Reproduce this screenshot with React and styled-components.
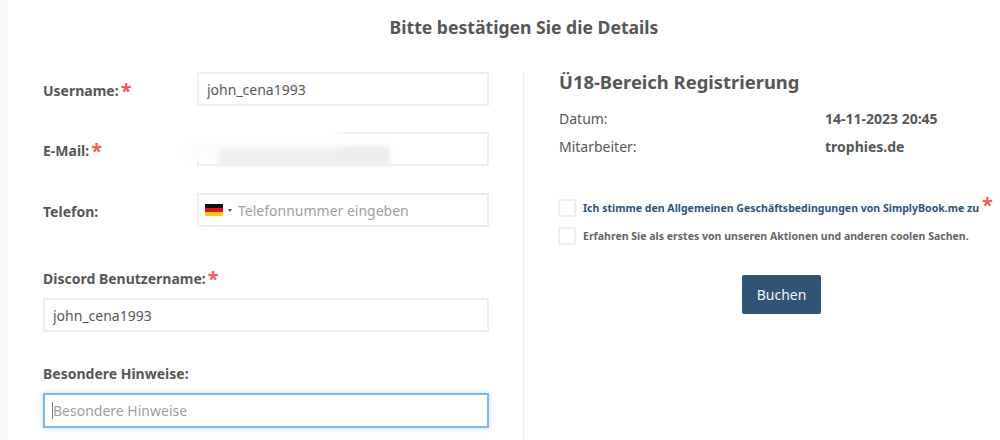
import React from "react";
import styled, { createGlobalStyle } from "styled-components";

const GlobalStyle = createGlobalStyle`
  html, body {
    margin: 0;
    padding: 0;
    background: #fff;
    overflow: hidden;
  }
  body {
    font-family: "Noto Sans", "Open Sans", sans-serif;
    color: #575757;
  }
`;

const Page = styled.div`
  width: 1000px;
  height: 440px;
  overflow: hidden;
  border-left: 8px solid #f8f8f8;
  box-sizing: border-box;
  position: relative;
`;

const Title = styled.h2`
  margin: 0;
  padding: 16px 0 0 40px;
  height: 72px;
  box-sizing: border-box;
  font-size: 17.6px;
  line-height: 22px;
  font-weight: 700;
  text-align: center;
  color: #575757;
`;

const Columns = styled.div`
  display: flex;
  padding-left: 35px;
`;

const FormColumn = styled.div`
  width: 446px;
  flex: none;
`;

const Row = styled.div`
  display: grid;
  grid-template-columns: 154px 292px;
  align-items: center;
  height: 34px;
  margin-bottom: ${({ $gap }) => $gap}px;
`;

const Label = styled.label`
  display: flex;
  align-items: center;
  gap: 2px;
  font-size: 14px;
  line-height: 20px;
  font-weight: 700;
  color: #575757;
  padding-top: 3px;
`;

const StackedLabel = styled(Label)`
  padding-top: 0;
  margin-bottom: ${({ $gap }) => $gap}px;
`;

const Star = styled.span`
  color: #f4595c;
  font-size: 20px;
  line-height: 20px;
  font-weight: 700;
  height: 20px;
  position: relative;
  top: ${({ $top }) => $top || 0}px;
`;

const TextInput = styled.input`
  display: block;
  width: 100%;
  height: ${({ $height }) => $height || 34}px;
  box-sizing: border-box;
  border: 2px solid ${({ $focused }) => ($focused ? "#7fb7e6" : "#eeeeee")};
  box-shadow: ${({ $focused }) => ($focused ? "0 0 5px rgba(127, 183, 230, 0.55)" : "none")};
  background: #fff;
  border-radius: 0;
  outline: none;
  padding: 0 8px;
  font-family: inherit;
  font-size: 14px;
  color: #575757;
  &::placeholder {
    color: #9f9f9f;
    opacity: 1;
  }
`;

const NotesField = styled.div`
  position: relative;
  &::after {
    content: "";
    position: absolute;
    left: 9px;
    top: 9px;
    width: 1px;
    height: 17px;
    background: #777;
  }
`;

const PhoneBox = styled.div`
  display: flex;
  align-items: center;
  height: 34px;
  box-sizing: border-box;
  border: 2px solid #eeeeee;
  padding-left: 6px;
`;

const Flag = styled.svg`
  width: 18px;
  height: 12px;
  flex: none;
`;

const FlagCaret = styled.span`
  width: 0;
  height: 0;
  margin: 0 6px 0 5px;
  border-left: 2.5px solid transparent;
  border-right: 2.5px solid transparent;
  border-top: 3px solid #555;
`;

const PhoneInput = styled.input`
  flex: 1;
  min-width: 0;
  border: 0;
  outline: none;
  padding: 0;
  font-family: inherit;
  font-size: 14px;
  color: #575757;
  &::placeholder {
    color: #9f9f9f;
    opacity: 1;
  }
`;

const Smudge = styled.div`
  position: absolute;
  left: 210px;
  top: 146px;
  width: 172px;
  height: 19px;
  background: #eeeeee;
  filter: blur(2px);
  &::before {
    content: "";
    position: absolute;
    left: -33px;
    top: -21px;
    width: 155px;
    height: 21px;
    background: #fff;
    filter: blur(5px);
  }
  &::after {
    content: "";
    position: absolute;
    left: -33px;
    top: -4px;
    width: 34px;
    height: 18px;
    background: #fcfcfc;
    filter: blur(3px);
  }
`;

const InfoColumn = styled.div`
  flex: 1;
  border-left: 1px solid #f0f0f0;
  margin-left: 34px;
  padding-left: 35px;
  height: 368px;
`;

const InfoTitle = styled.h3`
  margin: -1px 0 13px;
  font-size: 18.4px;
  line-height: 21px;
  font-weight: 700;
  color: #575757;
`;

const InfoRow = styled.div`
  display: grid;
  grid-template-columns: 266px 1fr;
  font-size: 14px;
  line-height: 28px;
  color: #575757;
`;

const InfoValue = styled.span`
  font-weight: 700;
`;

const Checks = styled.div`
  margin-top: 38px;
`;

const CheckRow = styled.div`
  display: flex;
  align-items: center;
  height: 18px;
  margin-bottom: 10px;
`;

const CheckBox = styled.span`
  width: 18px;
  height: 18px;
  margin-left: -1px;
  margin-right: 7px;
  box-sizing: border-box;
  border: 2px solid #eeeeee;
  border-radius: 2px;
  flex: none;
`;

const CheckText = styled.span`
  font-size: 10.55px;
  line-height: 14px;
  font-weight: 700;
  white-space: nowrap;
  color: ${({ $link }) => ($link ? "#305376" : "#666666")};
`;

const ButtonRow = styled.div`
  width: 460px;
  padding-left: 183px;
  box-sizing: border-box;
  margin-top: 30px;
`;

const BookButton = styled.button`
  width: 79px;
  height: 39px;
  border: 0;
  border-radius: 2px;
  background: #305376;
  color: #f2f5f8;
  font-family: inherit;
  font-size: 14px;
`;

const NotesSpacer = styled.div`
  height: 32px;
`;

const TermsStar = styled(Star)`
  margin-left: 3px;
`;

export default function App() {
  return (
    <>
      <GlobalStyle />
      <Page>
        <Title>Bitte bestätigen Sie die Details</Title>
        <Columns>
          <FormColumn>
            <Row $gap={26}>
              <Label>Username: <Star>*</Star></Label>
              <TextInput defaultValue="john_cena1993" />
            </Row>
            <Row $gap={27}>
              <Label>E-Mail: <Star>*</Star></Label>
              <TextInput />
            </Row>
            <Row $gap={42}>
              <Label>Telefon:</Label>
              <PhoneBox>
                <Flag viewBox="0 0 18 12">
                  <rect width="18" height="4" fill="#111" />
                  <rect y="4" width="18" height="4" fill="#d8141c" />
                  <rect y="8" width="18" height="4" fill="#fbc70a" />
                </Flag>
                <FlagCaret />
                <PhoneInput placeholder="Telefonnummer eingeben" />
              </PhoneBox>
            </Row>
            <StackedLabel $gap={9}>Discord Benutzername: <Star>*</Star></StackedLabel>
            <TextInput defaultValue="john_cena1993" />
            <NotesSpacer />
            <StackedLabel $gap={9}>Besondere Hinweise:</StackedLabel>
            <NotesField>
              <TextInput $focused $height={35} placeholder="Besondere Hinweise" />
            </NotesField>
          </FormColumn>
          <InfoColumn>
            <InfoTitle>Ü18-Bereich Registrierung</InfoTitle>
            <InfoRow><span>Datum:</span><InfoValue>14-11-2023 20:45</InfoValue></InfoRow>
            <InfoRow><span>Mitarbeiter:</span><InfoValue>trophies.de</InfoValue></InfoRow>
            <Checks>
              <CheckRow>
                <CheckBox />
                <CheckText $link>Ich stimme den Allgemeinen Geschäftsbedingungen von SimplyBook.me zu</CheckText>
                <TermsStar $top={-3}>*</TermsStar>
              </CheckRow>
              <CheckRow>
                <CheckBox />
                <CheckText>Erfahren Sie als erstes von unseren Aktionen und anderen coolen Sachen.</CheckText>
              </CheckRow>
            </Checks>
            <ButtonRow>
              <BookButton>Buchen</BookButton>
            </ButtonRow>
          </InfoColumn>
        </Columns>
        <Smudge />
      </Page>
    </>
  );
}
